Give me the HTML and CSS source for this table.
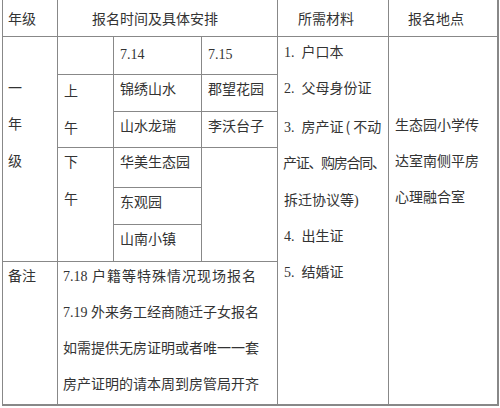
FILE: index.html
```html
<!DOCTYPE html>
<html lang="zh">
<head>
<meta charset="utf-8">
<link rel="stylesheet" href="styles.css">
</head>
<body>
<div class="sheet">
  <div class="c hd c1 r1 pl5">年级</div>
  <div class="c hd c2-4 r1 pl34">报名时间及具体安排</div>
  <div class="c hd c5 r1 pl20">所需材料</div>
  <div class="c hd c6 r1 pl19">报名地点</div>

  <div class="c c1 r2-7 tall grade">一<br>年<br>级</div>
  <div class="c c2 r2"></div>
  <div class="c c3 r2 date">7.14</div>
  <div class="c c4 r2 date">7.15</div>

  <div class="c c2 r3-4 tall half"><div class="shift1">上<br>午</div></div>
  <div class="c c3 r3 one">锦绣山水</div>
  <div class="c c4 r3 one">郡望花园</div>
  <div class="c c3 r4 one">山水龙瑞</div>
  <div class="c c4 r4 one">李沃台子</div>

  <div class="c c2 r5-7 tall half"><div class="shift3">下<br>午</div></div>
  <div class="c c3 r5 one">华美生态园</div>
  <div class="c c4 r5-7"></div>
  <div class="c c3 r6 one">东观园</div>
  <div class="c c3 r7 one">山南小镇</div>

  <div class="c c5 r2-8 tall mat">
    <div class="shift2">
      <div><span class="num">1.</span>户口本</div>
      <div><span class="num">2.</span>父母身份证</div>
      <div><span class="num">3.</span>房产证<span class="paren">(</span>不动</div>
      <div class="tight">产证、购房合同、</div>
      <div>拆迁协议等)</div>
      <div><span class="num">4.</span>出生证</div>
      <div><span class="num">5.</span>结婚证</div>
    </div>
  </div>
  <div class="c c6 r2-8 tall place">生态园小学传<br>达室南侧平房<br>心理融合室</div>

  <div class="c c1 r8 tall note-h"><div class="shift3">备注</div></div>
  <div class="c c2-4 r8 tall note">
    <div class="shift3">
      <div class="wide"><span class="num">7.18</span> 户籍等特殊情况现场报名</div>
      <div><span class="num">7.19</span> 外来务工经商随迁子女报名</div>
      <div>如需提供无房证明或者唯一一套</div>
      <div>房产证明的请本周到房管局开齐</div>
    </div>
  </div>
</div>
</body>
</html>
```
FILE: styles.css
```css
html, body {
  margin: 0;
  padding: 0;
  background: #ffffff;
}
body {
  width: 500px;
  height: 408px;
  overflow: hidden;
  font-family: "Liberation Serif", "Noto Sans CJK SC", serif;
  font-size: 14px;
  color: #333333;
}
.sheet {
  margin-left: 2px;
  width: 497px;
  display: grid;
  grid-template-columns: 55px 56px 88px 76px 111px 110px;
  grid-template-rows: 37px 38px 37px 36px 40px 37px 37px 144px;
  border-left: 1px solid #888888;
  box-sizing: border-box;
}
.c {
  box-sizing: border-box;
  border-right: 1px solid #888888;
  border-bottom: 1px solid #888888;
  padding-left: 6px;
  white-space: nowrap;
  overflow: hidden;
}
.hd {
  display: flex;
  align-items: center;
  font-family: "Noto Sans CJK SC", sans-serif;
}
.pl5 { padding-left: 5px; }
.pl34 { padding-left: 34px; }
.pl20 { padding-left: 20px; }
.pl19 { padding-left: 19px; }

.c1 { grid-column: 1; padding-left: 5px; }
.c2 { grid-column: 2; }
.c2-4 { grid-column: 2 / 5; }
.c3 { grid-column: 3; }
.c4 { grid-column: 4; }
.c5 { grid-column: 5; }
.c6 { grid-column: 6; border-right-width: 2px; }

.r1 { grid-row: 1; }
.r2 { grid-row: 2; }
.r3 { grid-row: 3; }
.r4 { grid-row: 4; }
.r5 { grid-row: 5; }
.r6 { grid-row: 6; }
.r7 { grid-row: 7; }
.r8 { grid-row: 8; border-bottom-width: 2px; }
.r2-7 { grid-row: 2 / 8; }
.r2-8 { grid-row: 2 / 9; border-bottom-width: 2px; }
.r3-4 { grid-row: 3 / 5; }
.r5-7 { grid-row: 5 / 8; }

.tall { line-height: 36.4px; }
.grade { padding-top: 34px; }
.half { line-height: 36.5px; }
.place { padding-top: 71px; line-height: 36px; }

.date {
  line-height: 36px;
  padding-top: 0;
}
.one { line-height: 30px; }

.mat { padding-left: 6px; }
.num {
  font-family: "Liberation Serif", serif;
  margin-right: 6px;
}
.mat .num { margin-right: 7px; }
.paren { margin: 0 3px 0 2px; font-family: "Noto Sans CJK SC", sans-serif; }
.tight { letter-spacing: -1.3px; margin-left: -1px; }

.note { line-height: 36px; padding-left: 5px; }
.note-h { line-height: 36px; }
.note .num { margin-right: 0; }
.wide { letter-spacing: 1px; }
.wide .num { letter-spacing: 0; }

.shift1 { margin-top: -1px; }
.shift2 { margin-top: -2px; }
.shift3 { margin-top: -3px; }
```
